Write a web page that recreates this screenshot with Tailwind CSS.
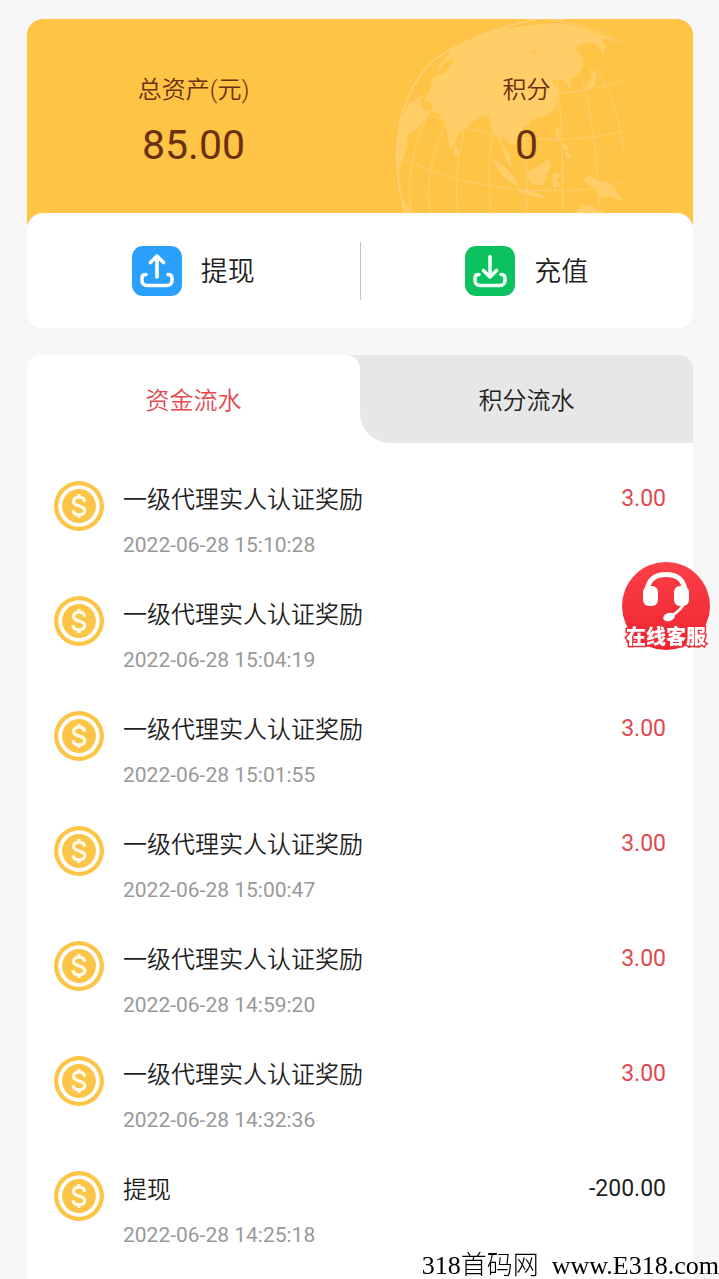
<!DOCTYPE html>
<html lang="zh-CN">
<head>
<meta charset="utf-8">
<meta name="viewport" content="width=device-width, initial-scale=1">
<title>我的资产</title>
<script src="https://cdn.jsdelivr.net/npm/@tailwindcss/browser@4"></script>
</head>
<body class="flex min-h-screen flex-col overflow-x-hidden bg-[#f7f7f7] pr-[26px] pl-[27px] pt-[19px] font-['Roboto','Noto_Sans_CJK_SC',sans-serif] text-[#1f1f1f]">
<svg class="hidden" aria-hidden="true">
  <symbol id="coin" viewBox="0 0 50 50">
    <circle cx="25" cy="25" r="25" fill="#fcc548"/>
    <circle cx="25" cy="25" r="18.800" fill="none" stroke="#fff" stroke-width="3.800"/>
    <path d="M30.600 20.800c-.2-3-2.400-4.600-5.600-4.600-3.200 0-5.500 1.700-5.500 4.300 0 5.800 11.300 3.200 11.300 9 0 2.700-2.400 4.300-5.700 4.300-3.500 0-5.900-1.500-6.100-4.700M25 13v4M25 33v4" fill="none" stroke="#fffbe8" stroke-width="3.200"/>
  </symbol>
</svg>

<section class="relative h-[206px] shrink-0 overflow-hidden rounded-t-[16px] bg-[#ffc345] pt-[53px] text-[#6b3010]">
  <svg class="absolute top-0 right-[66px] h-[194px] w-[233px]" viewBox="40 27 700 582" aria-hidden="true">
    <g fill="#ffce67">
      <path d="M130 272L150 235 154 206 185 190 215 158 200 150 168 196 176 168 212 122 262 92 330 66 400 50 480 42 530 38 600 50 650 68 724 98 680 88 662 86 676 112 668 136 652 104 628 98 590 106 588 122 604 138 611 166 592 196 566 208 576 226 568 238 552 214 530 206 514 214 528 226 534 254 528 288 502 316 458 328 440 330 446 346 426 350 428 364 412 378 404 408 384 398 368 374 362 392 388 436 394 474 378 454 360 404 348 372 336 366 324 318 300 322 262 344 246 366 232 372 222 404 208 418 194 340 176 314 148 302 158 284z"/>
      <path d="M136 250L118 272 128 300 146 304 136 328 112 352 90 366 76 385 82 400 70 440 50 500 44 430 58 340 84 282z"/>
      <path d="M224 402l14 24-6 18-12-12zM446 320l10 8-10 12-6-10zM528 348l10 10-2 40-12-18zM544 400l18 6 2 18-14-6zM556 424l16 8-4 14-14-4zM334 444l30 18 36 36 16 34-34-18-32-40zM504 446l8 20-12 30-12 30-32-4-18-24 8-14 28-14zM518 490l14-2 12 10-16 8 14 28-12-6-8 14-6-14zM412 534l46 10 46 20-36-2-50-14zM606 504l26-6 24 14 26 4 26 24 22 36-40-16-30 2-14-24-22-14zM628 176l22 14-8 38-30 18 12-30 10-12zM590 600l18-16 30 4 18 22h-70zM664 596l8 13h-16zM60 560l34 49H72z"/>
    </g>
    <g fill="#ffc345"><path d="M446 130l22-14-8 14zM182 182l30-34 8 8-34 38z"/></g>
    <g fill="none" stroke="#ffcf70" stroke-width="3">
      <path stroke-width="6" d="M72 609Q28 440 66 310T190 130 390 46 550 34"/>
      <path d="M500 30q130 8 226 70M140 310q140 66 320 78 160 6 272-26M80 452q130 66 330 86 180 16 316-20M530 252q120-14 204-42"/>
      <path d="M94 609Q66 480 144 310M150 609Q126 500 194 340M232 609Q218 500 250 366M332 609q-14-130 4-240M438 609q6-140-10-250M546 609Q552 400 530 200M656 609Q650 350 600 190M640 170Q710 260 730 420"/>
    </g>
  </svg>
  <dl class="relative grid grid-cols-2 text-center">
    <div><dt class="text-[24px] leading-[36px] font-[350]">总资产(元)</dt><dd class="mt-[12px] text-[41px] leading-[50px]">85.00</dd></div>
    <div><dt class="text-[24px] leading-[36px] font-[350]">积分</dt><dd class="mt-[12px] text-[41px] leading-[50px]">0</dd></div>
  </dl>
</section>

<nav class="relative -mt-[12px] flex h-[115px] shrink-0 items-center rounded-[16px] bg-white text-[27px] font-[350]">
  <button type="button" class="flex flex-1 items-center justify-center gap-[19px]">
    <svg class="size-[50px]" viewBox="0 0 50 50" aria-hidden="true"><rect width="50" height="50" rx="11" fill="#29a0fc"/><path d="M25 31V10.500M18.500 16.500L25 10l6.500 6.500M14 28.500c-3 0-4 1-4 4v1.500c0 4 1.500 5.500 5.500 5.500h19c4 0 5.500-1.500 5.500-5.500v-1.500c0-3-1-4-4-4" fill="none" stroke="#fff" stroke-width="3.600" stroke-linecap="round" stroke-linejoin="round"/></svg>
    <span class="pt-[4px]">提现</span>
  </button>
  <span class="h-[58px] w-px bg-[#c4c4c4]"></span>
  <button type="button" class="flex flex-1 items-center justify-center gap-[19px]">
    <svg class="size-[50px]" viewBox="0 0 50 50" aria-hidden="true"><rect width="50" height="50" rx="11" fill="#0bc160"/><path d="M25 10.500V31M18.500 24.500L25 31l6.500-6.500M14 28.500c-3 0-4 1-4 4v1.500c0 4 1.500 5.500 5.500 5.500h19c4 0 5.500-1.500 5.500-5.500v-1.500c0-3-1-4-4-4" fill="none" stroke="#f0fff4" stroke-width="3.600" stroke-linecap="round" stroke-linejoin="round"/></svg>
    <span class="pt-[4px]">充值</span>
  </button>
</nav>

<main class="mt-[27px] grow rounded-t-[14px] bg-white">
  <div class="grid h-[88px] grid-cols-2 text-[24px] font-[350]" role="tablist">
    <button type="button" role="tab" aria-selected="true" class="rounded-tl-[14px] bg-[#e7e7e7] text-[#e4474f]"><span class="flex h-full items-center justify-center rounded-t-[14px] bg-white pt-[3px]">资金流水</span></button>
    <button type="button" role="tab" aria-selected="false" class="rounded-tr-[14px] rounded-bl-[30px] bg-[#e7e7e7] pt-[3px]">积分流水</button>
  </div>
  <ul class="flex flex-col gap-[36px] px-[27px] pt-[38px]">
    <li class="flex gap-[19px]"><svg class="size-[50px] shrink-0" aria-hidden="true"><use href="#coin"/></svg><div class="grow"><p class="text-[24px] leading-[38px] font-[350]">一级代理实人认证奖励</p><time class="mt-[11px] block text-[21px] leading-[30px] text-[#999]">2022-06-28 15:10:28</time></div><span class="text-[23px] leading-[36px] text-[#e4474f]">3.00</span></li>
    <li class="flex gap-[19px]"><svg class="size-[50px] shrink-0" aria-hidden="true"><use href="#coin"/></svg><div class="grow"><p class="text-[24px] leading-[38px] font-[350]">一级代理实人认证奖励</p><time class="mt-[11px] block text-[21px] leading-[30px] text-[#999]">2022-06-28 15:04:19</time></div></li>
    <li class="flex gap-[19px]"><svg class="size-[50px] shrink-0" aria-hidden="true"><use href="#coin"/></svg><div class="grow"><p class="text-[24px] leading-[38px] font-[350]">一级代理实人认证奖励</p><time class="mt-[11px] block text-[21px] leading-[30px] text-[#999]">2022-06-28 15:01:55</time></div><span class="text-[23px] leading-[36px] text-[#e4474f]">3.00</span></li>
    <li class="flex gap-[19px]"><svg class="size-[50px] shrink-0" aria-hidden="true"><use href="#coin"/></svg><div class="grow"><p class="text-[24px] leading-[38px] font-[350]">一级代理实人认证奖励</p><time class="mt-[11px] block text-[21px] leading-[30px] text-[#999]">2022-06-28 15:00:47</time></div><span class="text-[23px] leading-[36px] text-[#e4474f]">3.00</span></li>
    <li class="flex gap-[19px]"><svg class="size-[50px] shrink-0" aria-hidden="true"><use href="#coin"/></svg><div class="grow"><p class="text-[24px] leading-[38px] font-[350]">一级代理实人认证奖励</p><time class="mt-[11px] block text-[21px] leading-[30px] text-[#999]">2022-06-28 14:59:20</time></div><span class="text-[23px] leading-[36px] text-[#e4474f]">3.00</span></li>
    <li class="flex gap-[19px]"><svg class="size-[50px] shrink-0" aria-hidden="true"><use href="#coin"/></svg><div class="grow"><p class="text-[24px] leading-[38px] font-[350]">一级代理实人认证奖励</p><time class="mt-[11px] block text-[21px] leading-[30px] text-[#999]">2022-06-28 14:32:36</time></div><span class="text-[23px] leading-[36px] text-[#e4474f]">3.00</span></li>
    <li class="flex gap-[19px]"><svg class="size-[50px] shrink-0" aria-hidden="true"><use href="#coin"/></svg><div class="grow"><p class="text-[24px] leading-[38px] font-[350]">提现</p><time class="mt-[11px] block text-[21px] leading-[30px] text-[#999]">2022-06-28 14:25:18</time></div><span class="text-[23px] leading-[36px]">-200.00</span></li>
  </ul>
</main>

<button type="button" class="fixed top-[562px] right-[9px] flex size-[88px] flex-col items-center rounded-full bg-linear-to-b from-[#fb3f48] to-[#f0222f] pt-[9px]">
  <svg class="h-[52px] w-[48px] shrink-0" viewBox="0 0 48 52" aria-hidden="true">
    <path d="M5 22C5 9 13 3.500 24 3.500S43 9 43 22" fill="none" stroke="#fff" stroke-width="5"/>
    <rect x="1" y="15" width="15" height="20" rx="6" fill="#fff"/><rect x="32" y="15" width="15" height="20" rx="6" fill="#fff"/>
    <path d="M43 30q-3 9-15 16" fill="none" stroke="#fff" stroke-width="2.600"/>
    <ellipse cx="27" cy="46" rx="6" ry="4" transform="rotate(-20 27 46)" fill="#fff"/>
  </svg>
  <span class="pt-[1px] text-[20px] leading-[26px] font-black whitespace-nowrap text-white [-webkit-text-stroke:3px_#ee2b37] [paint-order:stroke_fill]">在线客服</span>
</button>

<p class="fixed right-0 bottom-0 text-[26px] leading-[26px] whitespace-pre text-black font-['Liberation_Serif','Noto_Sans_CJK_SC',serif]"><span class="font-light">318首码网  </span>www.E318.com</p>
</body>
</html>
